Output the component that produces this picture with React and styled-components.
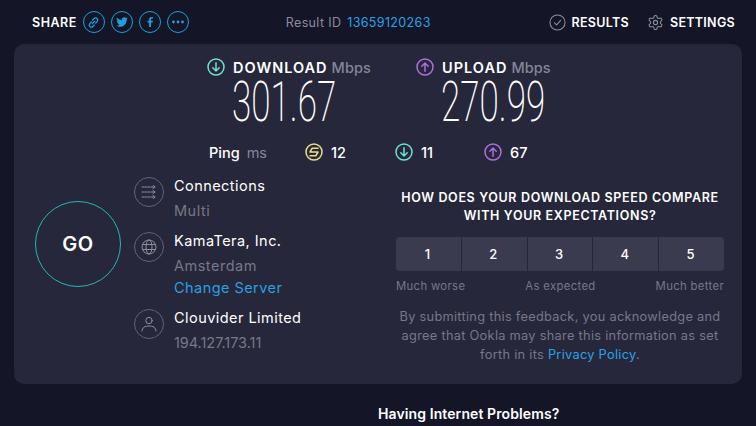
import React from "react";
import styled, { createGlobalStyle } from "styled-components";

const GlobalStyle = createGlobalStyle`
  html, body {
    margin: 0;
    width: 756px;
    height: 426px;
    overflow: hidden;
    background: #141526;
    font-family: Inter, "Noto Sans", sans-serif;
    color: #fff;
  }
`;

const Page = styled.div`
  width: 756px;
  height: 426px;
  overflow: hidden;
  display: flex;
  flex-direction: column;
`;
const Header = styled.div`
  height: 44px;
  display: flex;
  align-items: center;
  padding: 0 21px 0 32px;
`;
const ShareLabel = styled.span`
  font-size: 12.5px;
  font-weight: 600;
  letter-spacing: 0.5px;
  margin-right: 6px;
`;
const ShareIcons = styled.div`
  display: flex;
  gap: 6px;
`;
const ShareCircle = styled.div`
  width: 22px;
  height: 22px;
  box-sizing: border-box;
  border: 1.3px solid #1e9fdc;
  border-radius: 50%;
  display: flex;
  align-items: center;
  justify-content: center;
  color: #1e9fdc;
`;
const ResultId = styled.div`
  margin-left: 97px;
  font-size: 12.5px;
  letter-spacing: 0.35px;
  color: #8a8b9d;
  display: flex;
  gap: 6px;
  width: 204px;
`;
const Link = styled.span`
  color: #2aa3e6;
`;
const Nav = styled.div`
  margin-left: auto;
  display: flex;
  gap: 18px;
`;
const NavItem = styled.div`
  display: flex;
  align-items: center;
  gap: 6px;
  font-size: 12.5px;
  font-weight: 600;
  color: #8e8f9e;

  span {
    color: #fff;
    letter-spacing: 0.3px;
  }
`;

const Panel = styled.div`
  margin: 0 14px;
  height: 340px;
  box-sizing: border-box;
  background: #26273a;
  border-radius: 10px;
  padding-top: 13px;
  display: flex;
  flex-direction: column;
`;
const Speeds = styled.div`
  display: flex;
  padding-left: 193px;
  gap: 44px;
`;
const Speed = styled.div`
  width: 165px;
  &:last-child {
    width: 140px;
  }
`;
const SpeedHead = styled.div`
  display: flex;
  align-items: center;
  height: 20px;
  gap: 8px;
  font-size: 14.5px;
  font-weight: 600;
  letter-spacing: 1px;

  em {
    font-style: normal;
    font-weight: 500;
    letter-spacing: 0.1px;
    color: #858699;
    margin-left: -4px;
  }
`;
const SpeedValue = styled.div`
  margin-left: 25px;
  height: 50px;
  line-height: 50px;
  font-family: Roboto, "Liberation Sans", sans-serif;
  font-size: 56px;
  font-weight: 200;
  white-space: nowrap;
  transform: scaleX(0.625);
  transform-origin: left center;
`;
const PingRow = styled.div`
  margin-top: 15px;
  height: 20px;
  display: flex;
  align-items: center;
  padding-left: 195px;
  font-size: 14.5px;
  font-weight: 500;
`;
const PingLabel = styled.span`
  width: 96px;
  display: flex;
  gap: 7px;

  em {
    font-style: normal;
    font-weight: 400;
    color: #858699;
  }
`;
const PingStat = styled.span`
  display: flex;
  align-items: center;
  gap: 8px;
  width: ${(p) => p.$width}px;
`;
const Lower = styled.div`
  flex: 1;
  display: flex;
  margin-top: 15px;
`;
const GoColumn = styled.div`
  width: 120px;
  padding: 24px 0 0 21px;
  box-sizing: border-box;
`;
const GoButton = styled.div`
  width: 86px;
  height: 86px;
  box-sizing: border-box;
  border-radius: 50%;
  border: 1.3px solid #27b5b8;
  display: flex;
  align-items: center;
  justify-content: center;
  font-size: 20px;
  font-weight: 600;
  letter-spacing: 0.5px;
`;
const Servers = styled.div`
  width: 262px;
  display: flex;
  flex-direction: column;
  gap: 9px;
`;
const ServerRow = styled.div`
  display: flex;
  gap: 10px;
`;
const ServerIcon = styled.div`
  width: 30px;
  height: 30px;
  box-sizing: border-box;
  border: 1px solid #62637a;
  border-radius: 50%;
  display: flex;
  align-items: center;
  justify-content: center;
  color: #8e8f9e;
  flex: none;
`;
const ServerText = styled.div`
  font-size: 14.5px;
  line-height: 25px;
  margin-top: -4px;
  letter-spacing: 0.45px;
`;
const Muted = styled.div`
  color: #777889;
  letter-spacing: ${(p) => p.$spacing || 0.5}px;
`;
const ServerLink = styled.div`
  color: #2d9ee0;
  line-height: 19px;
  margin-bottom: 3px;
`;
const Feedback = styled.div`
  width: 328px;
  text-align: center;
`;
const Question = styled.div`
  font-size: 12.5px;
  font-weight: 600;
  line-height: 18px;
  letter-spacing: 0.65px;
  margin: 12px -6px 0;
`;
const Scale = styled.div`
  margin-top: 12px;
  height: 34px;
  display: grid;
  grid-template-columns: repeat(5, 1fr);
  gap: 1px;
  border-radius: 4px;
  overflow: hidden;
`;
const ScaleButton = styled.div`
  background: #3a3b4e;
  display: flex;
  align-items: center;
  justify-content: center;
  font-size: 13px;
  font-weight: 500;
  padding-right: 2px;
`;
const ScaleLabels = styled.div`
  display: flex;
  justify-content: space-between;
  margin-top: 8px;
  font-size: 11.3px;
  letter-spacing: 0.35px;
  line-height: 15px;
  color: #777889;
`;
const Legal = styled.div`
  margin: 14px -3px 0;
  font-size: 12.8px;
  letter-spacing: 0.28px;
  line-height: 18.9px;
  color: #777889;
`;
const Footer = styled.div`
  margin-top: 21px;
  padding-left: 378px;
  font-size: 14px;
  font-weight: 600;
  letter-spacing: 0.1px;
  line-height: 17px;
`;

const Ring = ({ color, size = 18, children }) => (
  <svg width={size} height={size} viewBox="0 0 18 18" fill="none" stroke={color} strokeWidth="1.5" strokeLinecap="round" strokeLinejoin="round">
    <circle cx="9" cy="9" r="8" />
    {children}
  </svg>
);
const Down = () => (
  <Ring color="#6fe0d0">
    <path d="M9 4.8v8.2M5.8 9.8 9 13l3.2-3.2" />
  </Ring>
);
const Up = () => (
  <Ring color="#b06fe0">
    <path d="M9 13.2V5M5.8 8.2 9 5l3.2 3.2" />
  </Ring>
);
const Latency = () => (
  <Ring color="#e4e08a">
    <path d="M13 5.200H7.200L5 9h8l-2.200 3.800H5" />
  </Ring>
);

const App = () => (
  <Page>
    <GlobalStyle />
    <Header>
      <ShareLabel>SHARE</ShareLabel>
      <ShareIcons>
        <ShareCircle>
          <svg width="13" height="13" viewBox="0 0 24 24" fill="none" stroke="currentColor" strokeWidth="2.4" strokeLinecap="round">
            <path d="M10 14 14.500 9.500M8 11l-3 3a4 4 0 0 0 5.600 5.600l3-3M16 13l3-3A4 4 0 0 0 13.400 4.400l-3 3" />
          </svg>
        </ShareCircle>
        <ShareCircle>
          <svg width="14" height="14" viewBox="0 0 24 24" fill="currentColor">
            <path d="M22 5.900a8.200 8.200 0 0 1-2.350.65 4.100 4.100 0 0 0 1.800-2.270 8.200 8.200 0 0 1-2.600 1 4.100 4.100 0 0 0-7 3.740A11.650 11.650 0 0 1 3.400 4.740a4.100 4.100 0 0 0 1.270 5.480 4.100 4.100 0 0 1-1.860-.51v.05a4.100 4.100 0 0 0 3.290 4.020 4.100 4.100 0 0 1-1.850.07 4.100 4.100 0 0 0 3.830 2.850A8.230 8.230 0 0 1 2 18.400a11.600 11.600 0 0 0 6.290 1.840c7.550 0 11.680-6.250 11.680-11.670l-.01-.53A8.300 8.300 0 0 0 22 5.900z" />
          </svg>
        </ShareCircle>
        <ShareCircle>
          <svg width="12" height="12" viewBox="0 0 24 24" fill="currentColor">
            <path d="M14 22v-9h3.200l.5-3.700H14V7c0-1.100.3-1.800 1.800-1.800h2V1.900c-.4 0-1.500-.1-2.800-.1-2.800 0-4.700 1.700-4.700 4.800v2.700H7V13h3.300v9z" />
          </svg>
        </ShareCircle>
        <ShareCircle>
          <svg width="14" height="14" viewBox="0 0 14 14" fill="currentColor">
            <circle cx="2.500" cy="7" r="1.400" />
            <circle cx="7" cy="7" r="1.400" />
            <circle cx="11.500" cy="7" r="1.400" />
          </svg>
        </ShareCircle>
      </ShareIcons>
      <ResultId>
        Result ID <Link>13659120263</Link>
      </ResultId>
      <Nav>
        <NavItem>
          <svg width="17" height="17" viewBox="0 0 18 18" fill="none" stroke="currentColor" strokeWidth="1.100" strokeLinecap="round" strokeLinejoin="round">
            <circle cx="9" cy="9" r="8" />
            <path d="m5.800 9.300 2.300 2.300 4.200-4.800" />
          </svg>
          <span>RESULTS</span>
        </NavItem>
        <NavItem>
          <svg width="17" height="17" viewBox="0 0 24 24" fill="none" stroke="currentColor" strokeWidth="1.500" strokeLinecap="round" strokeLinejoin="round">
            <path d="M12.220 2h-.44a2 2 0 0 0-2 2v.18a2 2 0 0 1-1 1.730l-.43.25a2 2 0 0 1-2 0l-.15-.08a2 2 0 0 0-2.730.73l-.22.380a2 2 0 0 0 .73 2.730l.15.100a2 2 0 0 1 1 1.720v.51a2 2 0 0 1-1 1.740l-.15.090a2 2 0 0 0-.73 2.730l.22.380a2 2 0 0 0 2.730.73l.15-.08a2 2 0 0 1 2 0l.43.250a2 2 0 0 1 1 1.730V20a2 2 0 0 0 2 2h.44a2 2 0 0 0 2-2v-.18a2 2 0 0 1 1-1.730l.43-.25a2 2 0 0 1 2 0l.15.080a2 2 0 0 0 2.730-.73l.22-.390a2 2 0 0 0-.73-2.730l-.15-.080a2 2 0 0 1-1-1.740v-.500a2 2 0 0 1 1-1.740l.15-.090a2 2 0 0 0 .73-2.730l-.22-.380a2 2 0 0 0-2.730-.73l-.15.080a2 2 0 0 1-2 0l-.43-.250a2 2 0 0 1-1-1.730V4a2 2 0 0 0-2-2z" />
            <circle cx="12" cy="12" r="3" />
          </svg>
          <span>SETTINGS</span>
        </NavItem>
      </Nav>
    </Header>

    <Panel>
      <Speeds>
        <Speed>
          <SpeedHead>
            <Down />
            DOWNLOAD <em>Mbps</em>
          </SpeedHead>
          <SpeedValue>301.67</SpeedValue>
        </Speed>
        <Speed>
          <SpeedHead>
            <Up />
            UPLOAD <em>Mbps</em>
          </SpeedHead>
          <SpeedValue>270.99</SpeedValue>
        </Speed>
      </Speeds>
      <PingRow>
        <PingLabel>
          Ping <em>ms</em>
        </PingLabel>
        <PingStat $width={90}>
          <Latency />
          12
        </PingStat>
        <PingStat $width={89}>
          <Down />
          11
        </PingStat>
        <PingStat $width={60}>
          <Up />
          67
        </PingStat>
      </PingRow>
      <Lower>
        <GoColumn>
          <GoButton>GO</GoButton>
        </GoColumn>
        <Servers>
          <ServerRow>
            <ServerIcon>
              <svg width="16" height="14" viewBox="0 0 16 14" fill="none" stroke="currentColor" strokeWidth="1" strokeLinecap="round" strokeLinejoin="round">
                <path d="M1 2h13M12 .5 14 2l-2 1.500M1 7h13M12 5.500 14 7l-2 1.500M1 12h13M12 10.500l2 1.500-2 1.500" strokeDasharray="2 1" />
              </svg>
            </ServerIcon>
            <ServerText>
              Connections
              <Muted>Multi</Muted>
            </ServerText>
          </ServerRow>
          <ServerRow>
            <ServerIcon>
              <svg width="16" height="16" viewBox="0 0 16 16" fill="none" stroke="currentColor" strokeWidth="1">
                <circle cx="8" cy="8" r="7" />
                <ellipse cx="8" cy="8" rx="3" ry="7" />
                <path d="M1.500 5.500h13M1.500 10.500h13" />
              </svg>
            </ServerIcon>
            <ServerText>
              KamaTera, Inc.
              <Muted>Amsterdam</Muted>
              <ServerLink>Change Server</ServerLink>
            </ServerText>
          </ServerRow>
          <ServerRow>
            <ServerIcon>
              <svg width="16" height="16" viewBox="0 0 16 16" fill="none" stroke="currentColor" strokeWidth="1" strokeLinecap="round">
                <circle cx="8" cy="4.500" r="3.200" />
                <path d="M1 15c0-3.500 3-5 7-5s7 1.500 7 5" />
              </svg>
            </ServerIcon>
            <ServerText>
              Clouvider Limited
              <Muted $spacing={-0.05}>194.127.173.11</Muted>
            </ServerText>
          </ServerRow>
        </Servers>
        <Feedback>
          <Question>
            HOW DOES YOUR DOWNLOAD SPEED COMPARE
            <br />
            WITH YOUR EXPECTATIONS?
          </Question>
          <Scale>
            {[1, 2, 3, 4, 5].map((n) => (
              <ScaleButton key={n}>{n}</ScaleButton>
            ))}
          </Scale>
          <ScaleLabels>
            <span>Much worse</span>
            <span>As expected</span>
            <span>Much better</span>
          </ScaleLabels>
          <Legal>
            By submitting this feedback, you acknowledge and
            <br />
            agree that Ookla may share this information as set
            <br />
            forth in its <Link>Privacy Policy</Link>.
          </Legal>
        </Feedback>
      </Lower>
    </Panel>
    <Footer>Having Internet Problems?</Footer>
  </Page>
);

export default App;
